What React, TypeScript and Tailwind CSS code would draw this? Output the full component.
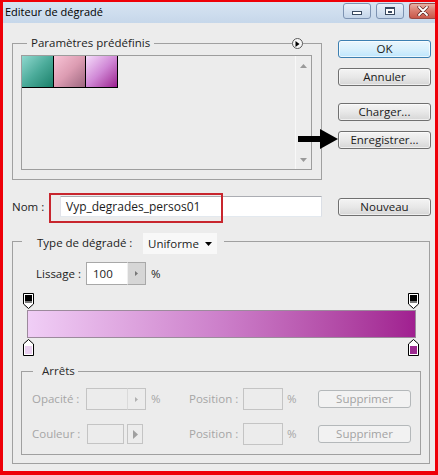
import React from "react";

function Btn({
  children,
  primary,
  disabled,
  className = "",
}: {
  children: React.ReactNode;
  primary?: boolean;
  disabled?: boolean;
  className?: string;
}) {
  const base =
    "w-[93px] h-[18px] flex items-center justify-center rounded-[3px] border text-[11.5px] leading-[14px] shrink-0";
  if (disabled) {
    return (
      <div className={`${base} border-[#b4b8ba] bg-[#f2f2f2] text-[#a3a3a3] ${className}`}>{children}</div>
    );
  }
  if (primary) {
    return (
      <div
        className={`${base} border-[#3c7fb1] bg-linear-to-b from-[#eaf6fd] via-[#d9f0fc] to-[#bee6fd] shadow-[inset_0_0_0_1px_#ffffffaa] text-[#1a1a1a] ${className}`}
      >
        {children}
      </div>
    );
  }
  return (
    <div
      className={`${base} border-[#707070] bg-linear-to-b from-[#f4f4f4] via-[#e8e8e8] to-[#d6d6d6] shadow-[inset_0_0_0_1px_#ffffff99] text-[#1a1a1a] ${className}`}
    >
      {children}
    </div>
  );
}

function TopStop() {
  return (
    <svg width="11" height="16" viewBox="0 0 11 16">
      <path d="M0.5 0.5 H10.5 V11 L5.5 15.5 L0.5 11 Z" fill="#fff" stroke="#000" />
      <rect x="2" y="2" width="7" height="6" fill="#000" />
      <rect x="2" y="8" width="7" height="2" fill="#7a7a7a" />
    </svg>
  );
}

function BottomStop({ color }: { color: string }) {
  return (
    <svg width="11" height="17" viewBox="0 0 11 17">
      <path d="M5.5 0.5 L10.5 5 V16.5 H0.5 V5 Z" fill="#fff" stroke="#000" />
      <rect x="2" y="7" width="7" height="8" fill={color} />
    </svg>
  );
}

export default function App() {
  return (
    <div className="w-[438px] h-[475px] flex flex-col overflow-hidden bg-[#ececec] border-[#ee0008] border-l-[3px] border-r-[3px] border-t-2 border-b-4 font-['Open_Sans',sans-serif] text-[11.5px] leading-[14px] text-[#1c1c1c]">
      {/* Title bar */}
      <div className="h-[21px] shrink-0 flex items-start justify-between bg-linear-to-b from-[#d7e4f2] to-[#c6d7ea]">
        <div className="pl-[2px] pt-[3px] text-[11px] text-[#000]">Editeur de dégradé</div>
        <div className="flex pt-[1px] gap-[5px]">
          <div className="w-[28px] h-[16px] rounded-[3px] border border-[#7d93b2] bg-linear-to-b from-[#e8f0f9] to-[#c4d5e9] flex items-end justify-center pb-[3px]">
            <div className="w-[10px] h-[4px] border border-[#3a4a60] bg-white" />
          </div>
          <div className="w-[28px] h-[16px] rounded-[3px] border border-[#7d93b2] bg-linear-to-b from-[#e8f0f9] to-[#c4d5e9] flex items-center justify-center">
            <div className="w-[10px] h-[8px] border border-[#3a4a60] border-t-2 bg-white flex items-center justify-center">
              <div className="w-[4px] h-[2px] bg-[#3a4a60]" />
            </div>
          </div>
          <div className="w-[26px] h-[16px] rounded-l-[3px] border border-r-0 border-[#9a4a44] bg-linear-to-b from-[#e8b0a4] via-[#d87a6c] to-[#c8584a] flex items-center justify-center">
            <svg width="12" height="10" viewBox="0 0 12 10">
              <path d="M2 1 L10 9 M10 1 L2 9" stroke="#5a2420" strokeWidth="3.2" strokeLinecap="round" />
              <path d="M2 1 L10 9 M10 1 L2 9" stroke="#fff" strokeWidth="1.8" strokeLinecap="round" />
            </svg>
          </div>
        </div>
      </div>

      {/* Body */}
      <div className="flex flex-col pl-[9px]">
        {/* Top row */}
        <div className="relative flex items-start mt-[13px]">
          <div className="relative">
            <fieldset className="w-[310px] border border-[#a0a0a0]">
              <legend className="ml-[14px] px-[4px] leading-[14px]">Paramètres prédéfinis</legend>
              <div className="ml-[8px] mt-[5px] mb-[9px] w-[291px] h-[115px] border border-[#9d9d9d] flex">
                <div className="flex-1 flex items-start">
                  <div className="w-[32px] h-[32px] border-r border-b border-black bg-linear-to-br from-[#8ed8cf] via-[#4bab9a] to-[#16806a]" />
                  <div className="w-[32px] h-[32px] border-r border-b border-black bg-linear-to-br from-[#f8c4d6] via-[#dc9cb2] to-[#9e6880]" />
                  <div className="w-[32px] h-[32px] border-r border-b border-black bg-linear-to-br from-[#f4dcfa] via-[#d088d6] to-[#9a1890]" />
                </div>
                <div className="w-[16px] border-l border-[#f8f8f8] bg-[#ededed] flex flex-col items-center justify-between pt-[8px] pb-[7px]">
                  <svg width="7" height="4" viewBox="0 0 7 4">
                    <path d="M0 4 L3.5 0 L7 4 Z" fill="#9a9a9a" />
                  </svg>
                  <svg width="7" height="4" viewBox="0 0 7 4">
                    <path d="M0 0 L3.5 4 L7 0 Z" fill="#9a9a9a" />
                  </svg>
                </div>
              </div>
            </fieldset>
            <div className="absolute left-[280px] top-[2px] w-[11px] h-[11px] rounded-full border border-[#5a5a5a] bg-[#f6f6f6] flex items-center justify-center">
              <svg width="5" height="6" viewBox="0 0 5 6">
                <path d="M0.5 0 L4.5 3 L0.5 6 Z" fill="#000" />
              </svg>
            </div>
          </div>

          <div className="ml-[16px] flex flex-col pt-[4px]">
            <Btn primary>OK</Btn>
            <Btn className="mt-[10px]">Annuler</Btn>
            <Btn className="mt-[17px]">Charger...</Btn>
            <Btn className="mt-[10px]">Enregistrer...</Btn>
          </div>

          <svg
            className="absolute left-[286px] top-[92px]"
            width="40"
            height="22"
            viewBox="0 0 40 22"
          >
            <rect x="0" y="8" width="23" height="6" fill="#000" />
            <path d="M22 1 L40 11 L22 21 Z" fill="#000" />
          </svg>
        </div>

        {/* Nom row */}
        <div className="relative flex items-center h-[21px] mt-[16px]">
          <div className="w-[48px]">Nom :</div>
          <div className="w-[262px] h-[21px] bg-white border border-[#abadb3] border-l-[#e2e3ea] border-r-[#dbdfe6] border-b-[#e3e9ef] flex items-center pl-[5px] text-[12px]">
            Vyp_degrades_persos01
          </div>
          <Btn className="ml-[16px]">Nouveau</Btn>
          <div className="absolute left-[37px] top-[-3px] w-[174px] h-[30px] border-2 border-[#c8262e]" />
        </div>

        {/* Gradient fieldset */}
        <fieldset className="w-[418px] mt-[16px] border border-[#a0a0a0]">
          <legend className="ml-[9px] pl-[15px] pr-[7px] h-[16px]">
            <div className="flex items-start">
              <span className="w-[106px] pt-[3px]">Type de dégradé :</span>
              <div className="w-[74px] h-[21px] bg-[#f8f8f8] flex items-center justify-between pl-[5px] pr-[5px]">
                <span>Uniforme</span>
                <svg width="7" height="4" viewBox="0 0 7 4">
                  <path d="M0 0 L7 0 L3.5 4 Z" fill="#000" />
                </svg>
              </div>
            </div>
          </legend>

          {/* Lissage */}
          <div className="flex items-center h-[23px] mt-[13px] pl-[23px]">
            <span className="w-[50px]">Lissage :</span>
            <div className="w-[41px] h-[23px] bg-white border border-[#a8a8a8] border-r-0 flex items-center pl-[6px]">100</div>
            <div className="w-[19px] h-[23px] bg-[#d6d6d6] border border-[#a8a8a8] border-l-[#f0f0f0] flex items-center justify-center">
              <svg width="3" height="5" viewBox="0 0 3 5">
                <path d="M0 0 L3 2.5 L0 5 Z" fill="#777" />
              </svg>
            </div>
            <span className="ml-[5px]">%</span>
          </div>

          {/* Stops + bar */}
          <div className="mt-[8px] ml-[10px] w-[396px] flex justify-between h-[16px]">
            <TopStop />
            <TopStop />
          </div>
          <div className="ml-[14px] w-[389px] h-[28px] mt-[1px] border border-[#9c8a9c] bg-linear-to-r from-[#f0cef6] via-[#cc7fca] to-[#a01f90]" />
          <div className="mt-[1px] ml-[10px] w-[396px] flex justify-between h-[17px]">
            <BottomStop color="#ead0f0" />
            <BottomStop color="#9c2a90" />
          </div>

          {/* Arrêts */}
          <fieldset className="ml-[8px] mt-[8px] mb-[8px] w-[400px] border border-[#a0a0a0]">
            <legend className="ml-[11px] pl-[9px] pr-[3px] leading-[14px] text-[#2a2a2a]">Arrêts</legend>
            <div className="flex items-center h-[22px] mt-[10px] pl-[10px] text-[#a6a6a6]">
              <span className="w-[54px]">Opacité :</span>
              <div className="w-[41px] h-[22px] border border-[#c4c4c4] border-r-0" />
              <div className="w-[19px] h-[22px] border border-[#c4c4c4] border-l-[#dadada] flex items-center justify-center">
                <svg width="3" height="5" viewBox="0 0 3 5">
                  <path d="M0 0 L3 2.5 L0 5 Z" fill="#b0b0b0" />
                </svg>
              </div>
              <span className="ml-[5px] w-[38px]">%</span>
              <span className="w-[54px]">Position :</span>
              <div className="w-[40px] h-[22px] border border-[#c4c4c4]" />
              <span className="ml-[4px] w-[31px]">%</span>
              <Btn disabled>Supprimer</Btn>
            </div>
            <div className="flex items-center h-[22px] mt-[13px] mb-[9px] pl-[10px] text-[#a6a6a6]">
              <span className="w-[55px]">Couleur :</span>
              <div className="w-[37px] h-[20px] border border-[#c4c4c4]" />
              <div className="ml-[3px] w-[16px] h-[20px] border border-[#c4c4c4] flex items-center justify-center">
                <svg width="5" height="9" viewBox="0 0 5 9">
                  <path d="M0 0 L5 4.5 L0 9 Z" fill="#a0a0a0" />
                </svg>
              </div>
              <span className="ml-[46px] w-[54px]">Position :</span>
              <div className="w-[40px] h-[22px] border border-[#c4c4c4]" />
              <span className="ml-[4px] w-[31px]">%</span>
              <Btn disabled>Supprimer</Btn>
            </div>
          </fieldset>
        </fieldset>
      </div>
    </div>
  );
}
